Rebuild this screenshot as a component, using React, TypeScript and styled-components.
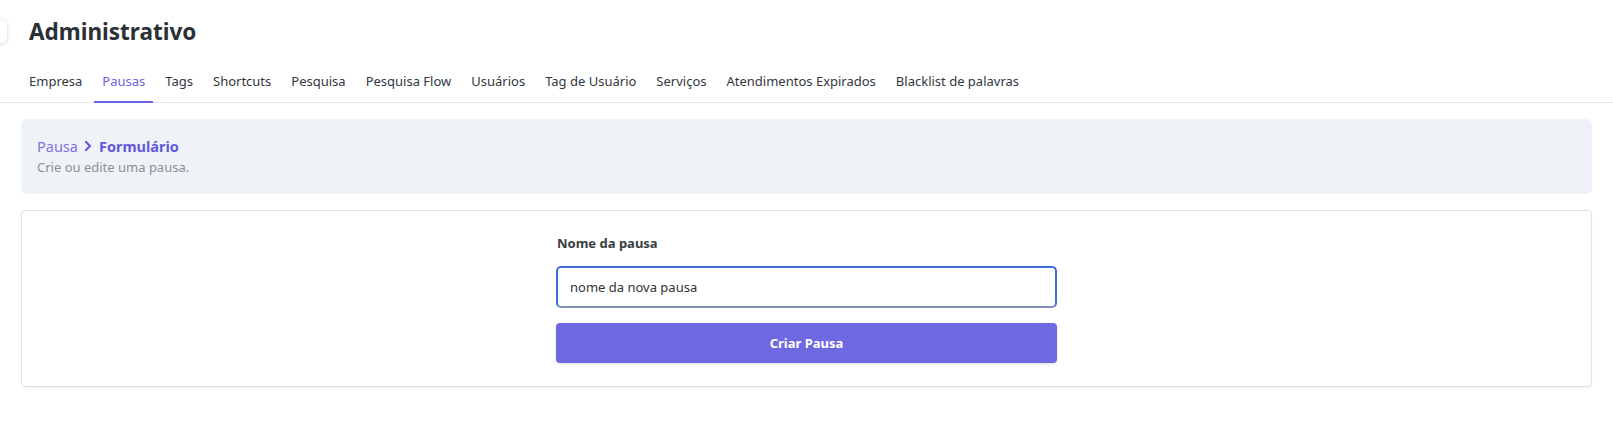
import React from "react";
import styled, { createGlobalStyle } from "styled-components";

const GlobalStyle = createGlobalStyle`
  * { box-sizing: border-box; }
  html, body { margin: 0; padding: 0; background: #ffffff; }
  body { font-family: "Noto Sans", "Open Sans", sans-serif; color: #333; }
`;

const Page = styled.div`
  position: relative;
  width: 100%;
  min-height: 435px;
  background: #fff;
`;

const SideToggle = styled.div`
  position: absolute;
  left: -16px;
  top: 20px;
  width: 23px;
  height: 23px;
  border-radius: 6px;
  background: #fff;
  box-shadow: 0 1px 4px rgba(0, 0, 0, 0.18);
`;

const Header = styled.header`
  padding: 17px 21px 0 21px;
`;

const Title = styled.h1`
  margin: 0;
  padding-left: 8px;
  font-family: "Noto Sans", sans-serif;
  font-size: 22.5px;
  font-weight: 700;
  line-height: 30px;
  color: #2b2f36;
`;

const TabBar = styled.nav`
  display: flex;
  gap: 4px;
  margin-top: 24px;
  border-bottom: 1px solid #e3e6ec;
  margin-left: -21px;
  margin-right: -21px;
  padding-left: 21px;
`;

const Tab = styled.div<{ $active?: boolean }>`
  padding: 0 8px 10px;
  font-size: 13px;
  line-height: 20px;
  color: ${(p) => (p.$active ? "#6c63e0" : "#333740")};
  border-bottom: 2px solid ${(p) => (p.$active ? "#6c63e0" : "transparent")};
  margin-bottom: -1px;
  white-space: nowrap;
`;

const Content = styled.main`
  padding: 16px 21px 0 21px;
  display: flex;
  flex-direction: column;
  gap: 16px;
`;

const Banner = styled.section`
  background: #eff2f7;
  border-radius: 6px;
  padding: 16px 16px 16px;
  height: 75px;
`;

const Crumbs = styled.div`
  display: flex;
  align-items: center;
  gap: 4px;
  font-size: 14.5px;
  line-height: 22px;
  color: #7b72e6;
`;

const CrumbCurrent = styled.span`
  font-weight: 700;
  color: #6259d8;
`;

const Chevron = styled.svg`
  width: 12px;
  height: 12px;
  margin-right: 1px;
`;

const Subtitle = styled.p`
  margin: 1px 0 0;
  font-size: 13px;
  line-height: 18px;
  color: #8c9099;
`;

const Card = styled.section`
  border: 1px solid #e2e2e2;
  border-radius: 4px;
  box-shadow: 0 1px 2px rgba(0, 0, 0, 0.05);
  padding: 22px 16px 23px;
  display: flex;
  justify-content: center;
`;

const Form = styled.form`
  width: 501px;
  display: flex;
  flex-direction: column;
`;

const Label = styled.label`
  font-size: 13px;
  font-weight: 700;
  color: #3a3d42;
  line-height: 20px;
  padding-left: 1px;
`;

const Input = styled.input`
  margin-top: 13px;
  height: 42px;
  width: 100%;
  border: 2px solid #3f6fd6;
  border-bottom-color: #7f8fb5;
  border-radius: 5px;
  padding: 0 12px;
  font-family: "Noto Sans", sans-serif;
  font-size: 13px;
  color: #333;
  outline: none;
  background: #fff;
`;

const Button = styled.button`
  margin-top: 15px;
  height: 40px;
  width: 100%;
  border: none;
  border-radius: 4px;
  background: #6f69e1;
  color: #fff;
  font-family: "Noto Sans", sans-serif;
  font-size: 13px;
  font-weight: 700;
  box-shadow: 0 1px 3px rgba(0, 0, 0, 0.12);
`;

const tabs = [
  "Empresa",
  "Pausas",
  "Tags",
  "Shortcuts",
  "Pesquisa",
  "Pesquisa Flow",
  "Usuários",
  "Tag de Usuário",
  "Serviços",
  "Atendimentos Expirados",
  "Blacklist de palavras",
];

export default function App() {
  return (
    <>
      <GlobalStyle />
      <Page>
        <SideToggle />
        <Header>
          <Title>Administrativo</Title>
          <TabBar>
            {tabs.map((t) => (
              <Tab key={t} $active={t === "Pausas"}>
                {t}
              </Tab>
            ))}
          </TabBar>
        </Header>
        <Content>
          <Banner>
            <Crumbs>
              <span>Pausa</span>
              <Chevron viewBox="0 0 12 12">
                <path d="M4 2 L8 6 L4 10" fill="none" stroke="#6259d8" strokeWidth="2.2" strokeLinecap="round" strokeLinejoin="round" />
              </Chevron>
              <CrumbCurrent>Formulário</CrumbCurrent>
            </Crumbs>
            <Subtitle>Crie ou edite uma pausa.</Subtitle>
          </Banner>
          <Card>
            <Form onSubmit={(e) => e.preventDefault()}>
              <Label>Nome da pausa</Label>
              <Input defaultValue="nome da nova pausa" />
              <Button type="submit">Criar Pausa</Button>
            </Form>
          </Card>
        </Content>
      </Page>
    </>
  );
}
